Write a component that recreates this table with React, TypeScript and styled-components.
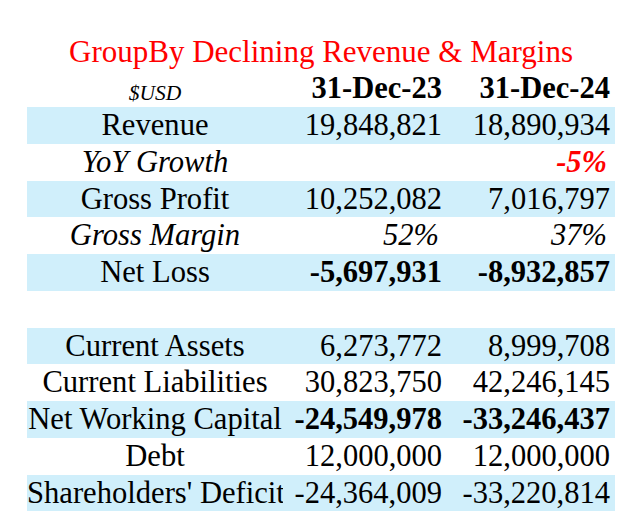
import React from 'react';
import styled, { createGlobalStyle } from 'styled-components';

const GlobalStyle = createGlobalStyle`
  html, body {
    margin: 0;
    padding: 0;
    background: #ffffff;
  }
`;

const ROW_HEIGHT = 36.75;
const COLUMNS = '256px 164px 168px';
const SERIF = `'Liberation Serif', 'DejaVu Serif', serif`;

const Sheet = styled.div`
  display: flex;
  flex-direction: column;
  width: 588px;
  margin-left: 27px;
  padding-top: 33.5px;
  font-family: ${SERIF};
  color: #000000;
`;

const Title = styled.div`
  height: ${ROW_HEIGHT}px;
  line-height: ${ROW_HEIGHT}px;
  font-size: 31px;
  color: #ff0000;
  text-align: center;
  white-space: nowrap;
`;

const Row = styled.div<{ $shaded?: boolean }>`
  display: grid;
  grid-template-columns: ${COLUMNS};
  height: ${ROW_HEIGHT}px;
  background-color: ${({ $shaded }) => ($shaded ? '#d0effb' : 'transparent')};
`;

const Label = styled.div<{ $italic?: boolean }>`
  overflow: hidden;
  white-space: nowrap;
  text-align: center;
  font-size: 30.6px;
  line-height: ${ROW_HEIGHT}px;
  font-style: ${({ $italic }) => ($italic ? 'italic' : 'normal')};
`;

const UnitLabel = styled.div`
  text-align: center;
  font-size: 21.5px;
  font-style: italic;
  line-height: ${ROW_HEIGHT}px;
  padding-top: 5px;
`;

const Value = styled.div<{ $bold?: boolean; $italic?: boolean; $red?: boolean }>`
  overflow: hidden;
  white-space: nowrap;
  text-align: right;
  padding-right: ${({ $italic }) => ($italic ? 8 : 5)}px;
  font-size: 30.5px;
  line-height: ${ROW_HEIGHT}px;
  font-weight: ${({ $bold }) => ($bold ? 700 : 400)};
  font-style: ${({ $italic }) => ($italic ? 'italic' : 'normal')};
  color: ${({ $red }) => ($red ? '#ff0000' : '#000000')};
`;

type Line = {
  label: string;
  values: [string, string];
  shaded?: boolean;
  italic?: boolean;
  bold?: boolean;
  redLast?: boolean;
};

const income: Line[] = [
  { label: 'Revenue', values: ['19,848,821', '18,890,934'], shaded: true },
  { label: 'YoY Growth', values: ['', '-5%'], italic: true, bold: true, redLast: true },
  { label: 'Gross Profit', values: ['10,252,082', '7,016,797'], shaded: true },
  { label: 'Gross Margin', values: ['52%', '37%'], italic: true },
  { label: 'Net Loss', values: ['-5,697,931', '-8,932,857'], shaded: true, bold: true },
];

const balance: Line[] = [
  { label: 'Current Assets', values: ['6,273,772', '8,999,708'], shaded: true },
  { label: 'Current Liabilities', values: ['30,823,750', '42,246,145'] },
  { label: 'Net Working Capital', values: ['-24,549,978', '-33,246,437'], shaded: true, bold: true },
  { label: 'Debt', values: ['12,000,000', '12,000,000'] },
  { label: "Shareholders' Deficit", values: ['-24,364,009', '-33,220,814'], shaded: true },
];

function DataRow({ line }: { line: Line }) {
  return (
    <Row $shaded={line.shaded}>
      <Label $italic={line.italic}>{line.label}</Label>
      <Value $bold={line.bold} $italic={line.italic}>
        {line.values[0]}
      </Value>
      <Value $bold={line.bold} $italic={line.italic} $red={line.redLast}>
        {line.values[1]}
      </Value>
    </Row>
  );
}

export default function App() {
  return (
    <>
      <GlobalStyle />
      <Sheet>
        <Title>GroupBy Declining Revenue &amp; Margins</Title>
        <Row>
          <UnitLabel>$USD</UnitLabel>
          <Value $bold>31-Dec-23</Value>
          <Value $bold>31-Dec-24</Value>
        </Row>
        {income.map((line) => (
          <DataRow key={line.label} line={line} />
        ))}
        <Row />
        {balance.map((line) => (
          <DataRow key={line.label} line={line} />
        ))}
      </Sheet>
    </>
  );
}
